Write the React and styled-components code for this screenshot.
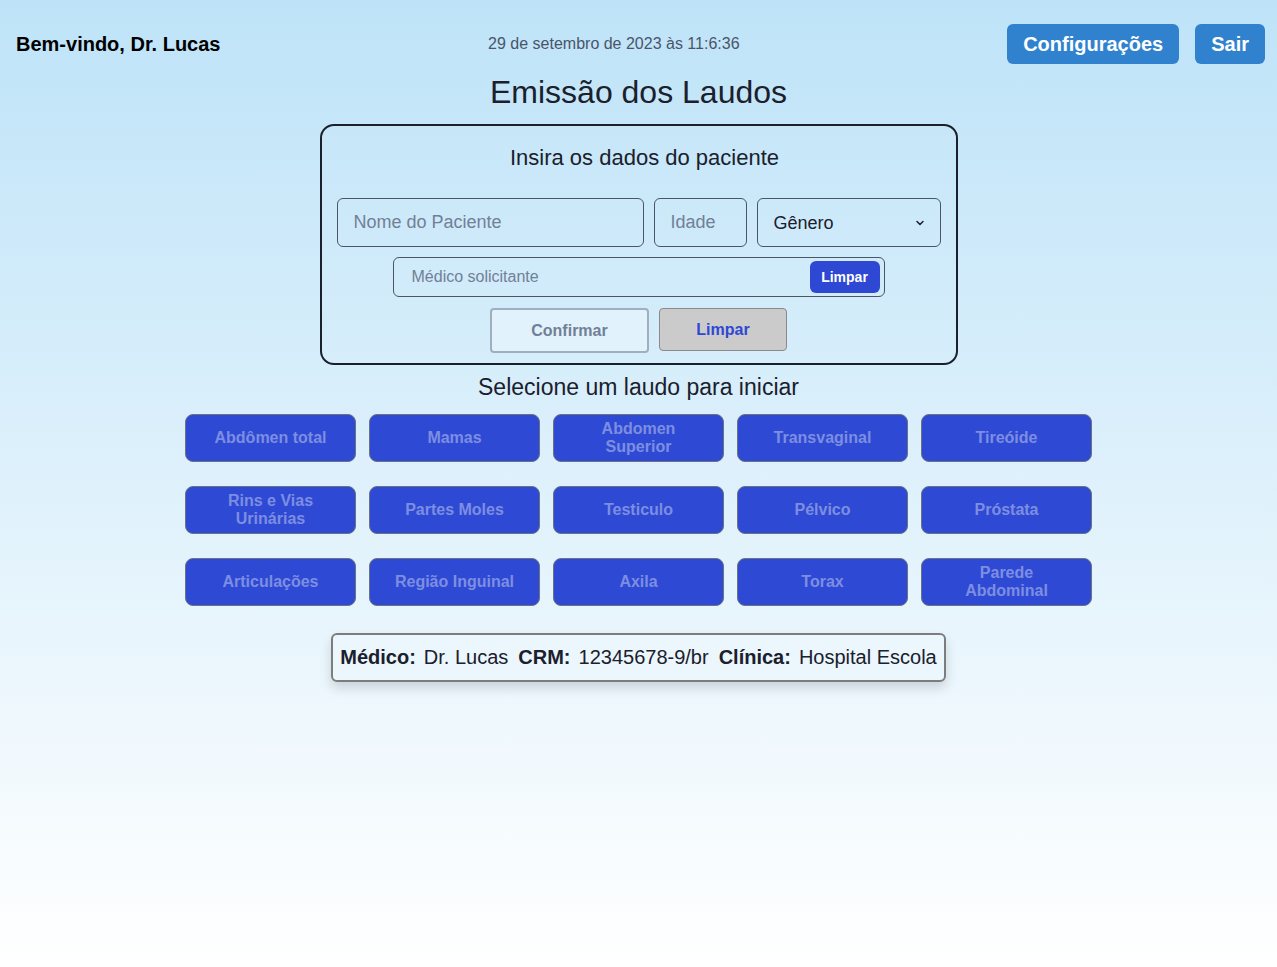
import React from 'react';
import styled, { createGlobalStyle } from 'styled-components';

const GlobalStyle = createGlobalStyle`
  html, body {
    margin: 0;
    min-height: 100%;
  }
  body {
    font-family: "Liberation Sans", Arial, sans-serif;
    color: #1a202c;
    background: linear-gradient(to bottom, #bee3f8 0%, #ffffff 100%);
    min-height: 967px;
  }
`;

const laudos = [
  'Abdômen total', 'Mamas', 'Abdomen Superior', 'Transvaginal', 'Tireóide',
  'Rins e Vias Urinárias', 'Partes Moles', 'Testiculo', 'Pélvico', 'Próstata',
  'Articulações', 'Região Inguinal', 'Axila', 'Torax', 'Parede Abdominal',
];

const info = [
  ['Médico:', 'Dr. Lucas'],
  ['CRM:', '12345678-9/br'],
  ['Clínica:', 'Hospital Escola'],
];

export default function App() {
  return (
    <Page>
      <GlobalStyle />
      <Header>
        <Welcome>Bem-vindo, Dr. Lucas</Welcome>
        <DateText>29 de setembro de 2023 às 11:6:36</DateText>
        <HeaderActions>
          <HeaderButton>Configurações</HeaderButton>
          <HeaderButton>Sair</HeaderButton>
        </HeaderActions>
      </Header>

      <Title>Emissão dos Laudos</Title>

      <Card>
        <CardTitle>Insira os dados do paciente</CardTitle>
        <InputRow>
          <TextInput placeholder="Nome do Paciente" width={307} />
          <TextInput placeholder="Idade" width={93} />
          <SelectWrap>
            <Select defaultValue="">
              <option value="">Gênero</option>
              <option value="m">Masculino</option>
              <option value="f">Feminino</option>
            </Select>
            <Chevron width="12" height="12" viewBox="0 0 24 24">
              <path d="M6 9l6 6 6-6" fill="none" stroke="#1a202c" strokeWidth="3" strokeLinecap="round" strokeLinejoin="round" />
            </Chevron>
          </SelectWrap>
        </InputRow>
        <DoctorGroup>
          <DoctorInput placeholder="Médico solicitante" />
          <InnerButton>Limpar</InnerButton>
        </DoctorGroup>
        <ActionRow>
          <ConfirmButton disabled>Confirmar</ConfirmButton>
          <ClearButton>Limpar</ClearButton>
        </ActionRow>
      </Card>

      <Subtitle>Selecione um laudo para iniciar</Subtitle>

      <LaudoGrid>
        {laudos.map((l) => (
          <LaudoButton key={l}>{l}</LaudoButton>
        ))}
      </LaudoGrid>

      <InfoBox>
        {info.map(([label, value]) => (
          <InfoItem key={label}>
            <InfoLabel>{label}</InfoLabel>
            <span>{value}</span>
          </InfoItem>
        ))}
      </InfoBox>
    </Page>
  );
}

const Page = styled.div`
  display: flex;
  flex-direction: column;
  align-items: center;
  padding-bottom: 40px;
`;

const Header = styled.header`
  align-self: stretch;
  display: flex;
  justify-content: space-between;
  align-items: center;
  padding: 24px 12px 0 16px;
`;

const Welcome = styled.div`
  font-size: 20px;
  font-weight: bold;
  color: #000;
`;

const DateText = styled.div`
  font-size: 16px;
  color: #4a5568;
`;

const HeaderActions = styled.div`
  display: flex;
  gap: 16px;
`;

const HeaderButton = styled.button`
  height: 40px;
  padding: 0 16px;
  border: none;
  border-radius: 6px;
  background: #3182ce;
  color: #fff;
  font-family: "Liberation Sans", Arial, sans-serif;
  font-size: 20px;
  font-weight: bold;
  cursor: pointer;
`;

const Title = styled.h1`
  margin: 10px 0 13px;
  font-size: 32px;
  font-weight: normal;
  line-height: 37px;
`;

const Card = styled.div`
  box-sizing: border-box;
  width: 638px;
  border: 2px solid #1a202c;
  border-radius: 14px;
  padding: 20px 16px 10px;
  display: flex;
  flex-direction: column;
  align-items: center;
`;

const CardTitle = styled.div`
  font-size: 22px;
  line-height: 24px;
  margin-bottom: 28px;
  padding-left: 12px;
`;

const InputRow = styled.div`
  display: flex;
  gap: 10px;
`;

const TextInput = styled.input`
  box-sizing: border-box;
  width: ${(p) => p.width}px;
  height: 49px;
  padding: 0 16px;
  border: 1px solid #4a5568;
  border-radius: 6px;
  background: transparent;
  font-family: "Liberation Sans", Arial, sans-serif;
  font-size: 18px;
  color: #1a202c;
  outline: none;
  &::placeholder {
    color: #718096;
  }
`;

const SelectWrap = styled.div`
  position: relative;
  width: 184px;
`;

const Select = styled.select`
  box-sizing: border-box;
  width: 100%;
  height: 49px;
  padding: 0 16px;
  border: 1px solid #4a5568;
  border-radius: 6px;
  background: transparent;
  appearance: none;
  font-family: "Liberation Sans", Arial, sans-serif;
  font-size: 18px;
  color: #1a202c;
  outline: none;
`;

const Chevron = styled.svg`
  position: absolute;
  right: 15px;
  top: 19px;
  pointer-events: none;
`;

const DoctorGroup = styled.div`
  box-sizing: border-box;
  width: 492px;
  height: 40px;
  margin-top: 10px;
  display: flex;
  align-items: center;
  padding: 0 4px 0 16px;
  border: 1px solid #4a5568;
  border-radius: 6px;
`;

const DoctorInput = styled.input`
  flex: 1;
  border: none;
  background: transparent;
  font-family: "Liberation Sans", Arial, sans-serif;
  font-size: 16px;
  color: #1a202c;
  outline: none;
  &::placeholder {
    color: #718096;
  }
`;

const InnerButton = styled.button`
  height: 32px;
  width: 70px;
  border: none;
  border-radius: 6px;
  background: #2e48d4;
  color: #fff;
  font-family: "Liberation Sans", Arial, sans-serif;
  font-size: 14px;
  font-weight: bold;
`;

const ActionRow = styled.div`
  display: flex;
  gap: 10px;
  margin-top: 11px;
  align-items: flex-start;
`;

const ConfirmButton = styled.button`
  box-sizing: border-box;
  width: 159px;
  height: 45px;
  border: 2px solid #a0aec0;
  border-radius: 4px;
  background: rgba(255, 255, 255, 0.3);
  color: #718096;
  font-family: "Liberation Sans", Arial, sans-serif;
  font-size: 16px;
  font-weight: bold;
`;

const ClearButton = styled.button`
  box-sizing: border-box;
  width: 128px;
  height: 43px;
  border: 1px solid #8a8a8a;
  border-radius: 4px;
  background: #cbcbcb;
  color: #2e48d4;
  font-family: "Liberation Sans", Arial, sans-serif;
  font-size: 16px;
  font-weight: bold;
`;

const Subtitle = styled.div`
  margin: 9px 0 14px;
  font-size: 23px;
  line-height: 26px;
`;

const LaudoGrid = styled.div`
  display: grid;
  grid-template-columns: repeat(5, 171px);
  column-gap: 13px;
  row-gap: 24px;
`;

const LaudoButton = styled.button`
  box-sizing: border-box;
  height: 48px;
  padding: 0 20px;
  border: 1px solid #6b7280;
  border-radius: 8px;
  background: #2e4ad4;
  color: #7d8ee2;
  font-family: "Liberation Sans", Arial, sans-serif;
  font-size: 16px;
  font-weight: bold;
  line-height: 18px;
`;

const InfoBox = styled.div`
  margin-top: 27px;
  padding: 0 7px;
  height: 49px;
  box-sizing: border-box;
  display: flex;
  align-items: center;
  gap: 10px;
  border: 2px solid #7d7d7d;
  border-radius: 6px;
  background: #ebf6fd;
  box-shadow: 0 6px 12px rgba(0, 0, 0, 0.15);
  font-size: 20px;
  color: #1a202c;
`;

const InfoItem = styled.div`
  display: flex;
  gap: 8px;
  white-space: nowrap;
`;

const InfoLabel = styled.span`
  font-weight: bold;
`;
